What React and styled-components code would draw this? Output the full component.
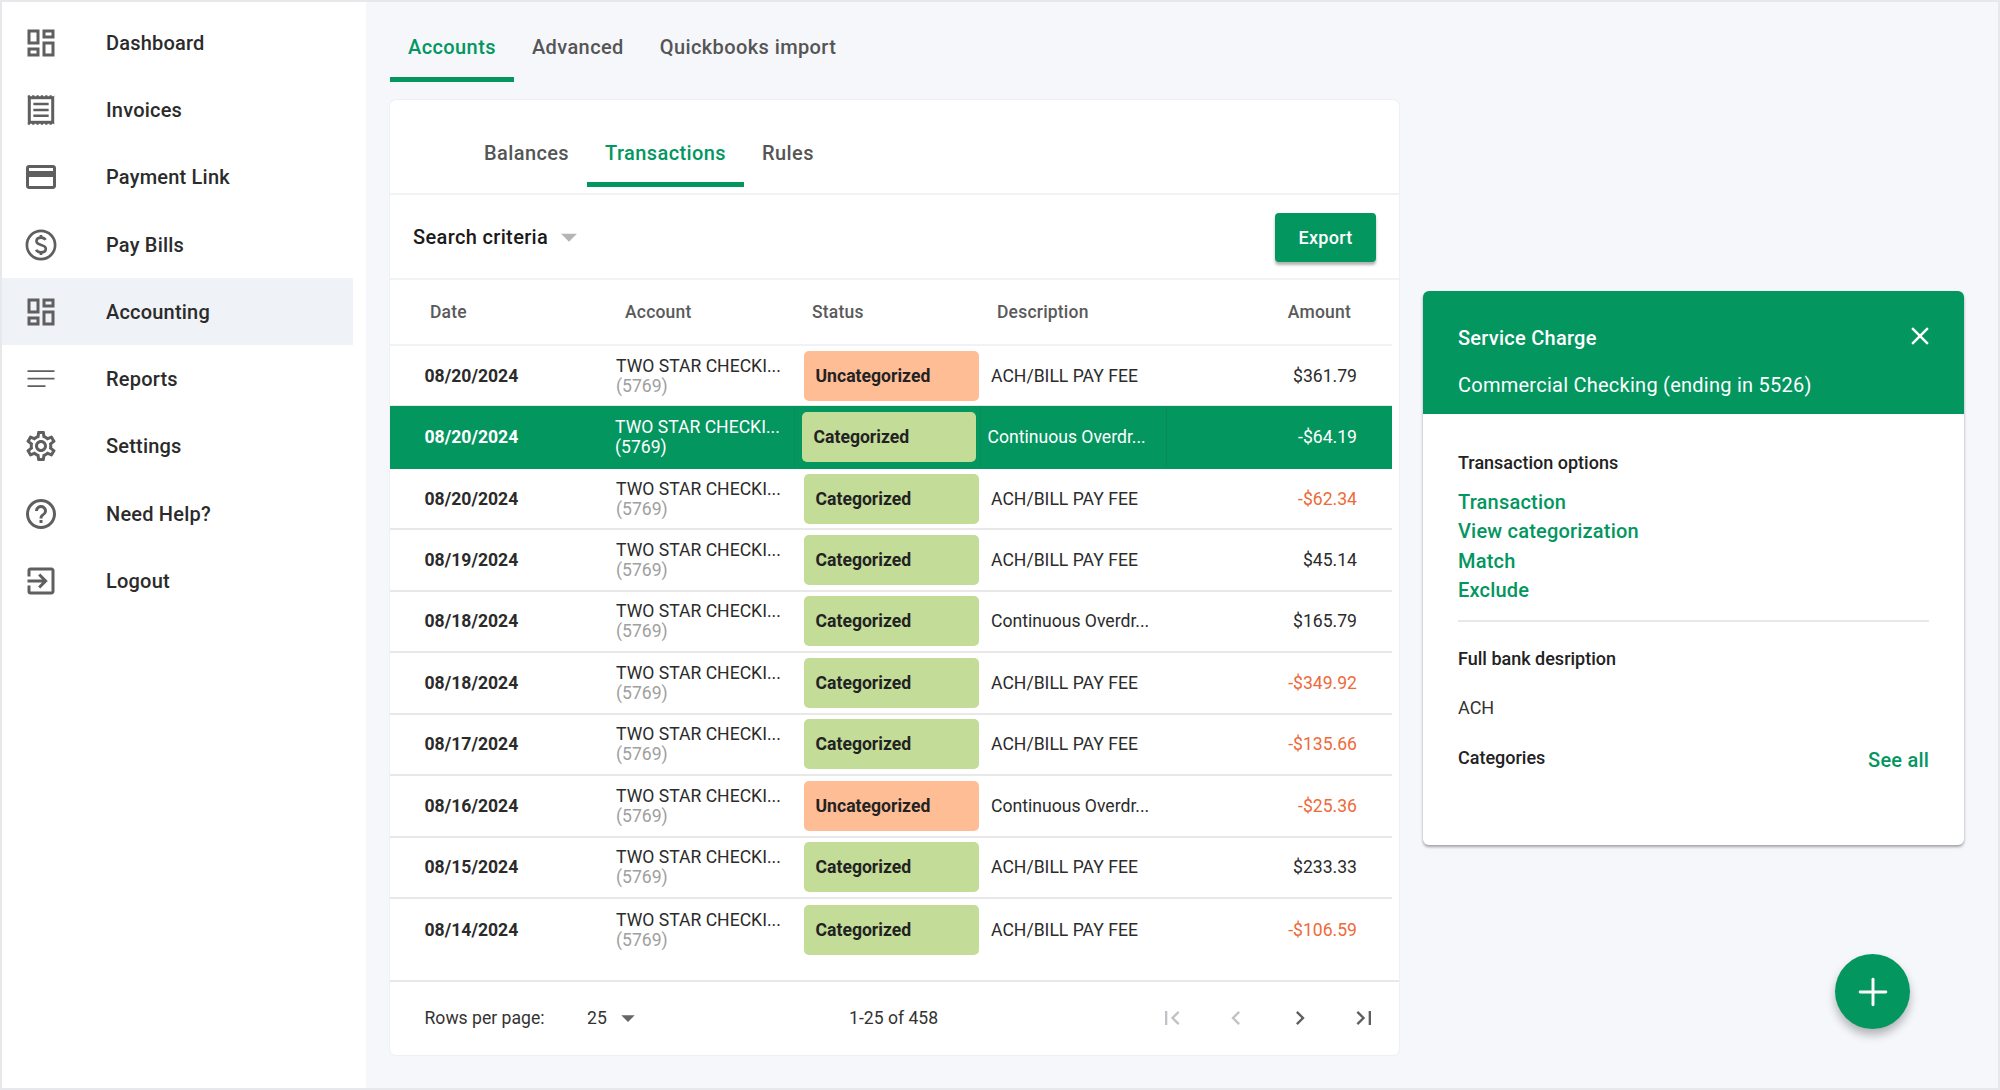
import React from "react";
import styled, { createGlobalStyle } from "styled-components";
import { Plus } from "lucide-react";
import {
  MdOutlineDashboard,
  MdCreditCard,
  MdOutlineSettings,
  MdHelpOutline,
  MdOutlineExitToApp,
  MdClose,
  MdArrowDropDown,
  MdFirstPage,
  MdLastPage,
  MdChevronLeft,
  MdChevronRight,
} from "react-icons/md";

const GREEN = "#03965f";

const GlobalStyle = createGlobalStyle`
  html, body { margin: 0; padding: 0; }
  body { font-family: Roboto, "Liberation Sans", sans-serif; color: #222; }
  * { box-sizing: border-box; }
`;

const Page = styled.div`
  position: relative;
  display: flex;
  width: 2000px;
  height: 1090px;
  background: #f5f7fb;
  border: 2px solid #e6e8ec;
  overflow: hidden;
`;

const Sidebar = styled.nav`
  width: 364px;
  flex-shrink: 0;
  padding: 7px 13px 0 0;
  background: #fff;
`;

const NavItem = styled.div`
  display: flex;
  align-items: center;
  gap: 47px;
  height: 67.3px;
  padding-left: 21px;
  font-size: 20px;
  font-weight: 500;
  letter-spacing: 0.2px;
  color: #2b2b2b;
  background: ${(p) => (p.$active ? "#eff2f6" : "transparent")};
  svg {
    flex-shrink: 0;
    color: #5f5f5f;
  }
`;

const Main = styled.main`
  flex: 1;
  padding-left: 24px;
`;

const TabBar = styled.div`
  display: flex;
  height: 80px;
  margin-bottom: 18px;
`;

const Tab = styled.div`
  display: flex;
  align-items: center;
  padding: 15px 18px 0;
  font-size: 20px;
  font-weight: 500;
  letter-spacing: 0.4px;
  color: ${(p) => (p.$active ? GREEN : "#555")};
  border-bottom: 5px solid ${(p) => (p.$active ? GREEN : "transparent")};
`;

const SubTab = styled(Tab)`
  padding-top: 23px;
`;

const Columns = styled.div`
  display: grid;
  grid-template-columns: 1009px 541px;
  column-gap: 24px;
  align-items: start;
`;

const Card = styled.section`
  height: 955px;
  background: #fff;
  border-radius: 6px;
  box-shadow: 0 0 0 1px #eef0f3;
`;

const SubTabBar = styled.div`
  display: flex;
  height: 95px;
  padding: 0 0 6px 76px;
  border-bottom: 2px solid #f1f2f4;
`;

const SearchBar = styled.div`
  display: flex;
  align-items: center;
  justify-content: space-between;
  height: 85px;
  padding: 0 23px;
  border-bottom: 2px solid #f1f2f4;
`;

const SearchLabel = styled.div`
  display: flex;
  align-items: center;
  gap: 2px;
  font-size: 20px;
  font-weight: 500;
  letter-spacing: 0.35px;
  color: #1a1a1a;
  svg {
    color: #b5b5b5;
  }
`;

const ExportButton = styled.button`
  width: 101px;
  height: 49px;
  margin-top: 2px;
  border: 0;
  border-radius: 4px;
  background: ${GREEN};
  color: #fff;
  font: 500 18px Roboto, sans-serif;
  letter-spacing: 0.3px;
  box-shadow: 0 3px 3px rgba(0, 0, 0, 0.3);
`;

const HeaderRow = styled.div`
  display: grid;
  grid-template-columns: 195px 187px 185px 1fr auto;
  align-items: center;
  width: 1002px;
  height: 66px;
  padding: 0 41px 0 40px;
  font-size: 17.5px;
  font-weight: 500;
  letter-spacing: 0.2px;
  color: #5a5a5a;
  border-bottom: 2px solid #f1f2f4;
`;

const Row = styled.div`
  display: grid;
  grid-template-columns: ${(p) =>
    p.$selected ? "225px 179px 186px 186px 1fr" : "226px 188px 175px 1fr 1fr"};
  align-items: stretch;
  width: 1002px;
  height: ${(p) => (p.$selected ? "62.45px" : "61.45px")};
  margin-top: ${(p) => (p.$selected ? "-1px" : "0")};
  border-bottom: 2px solid ${(p) => (p.$selected ? GREEN : "#e8e8e8")};
  font-size: 17.6px;
  color: ${(p) => (p.$selected ? "#fff" : "#2b2b2b")};
  background: ${(p) => (p.$selected ? GREEN : "transparent")};
  &:last-of-type {
    border-bottom: 0;
  }
`;

const DateCell = styled.div`
  display: flex;
  align-items: center;
  padding-left: 34.5px;
  font-weight: 700;
`;

const AccountCell = styled.div`
  display: flex;
  flex-direction: column;
  justify-content: center;
  line-height: 20px;
`;

const AccountId = styled.span`
  color: ${(p) => (p.$selected ? "#fff" : "#a0a0a0")};
`;

const StatusCell = styled.div`
  display: flex;
  align-items: center;
  padding-left: ${(p) => (p.$selected ? "7px" : "0")};
  border-left: ${(p) => (p.$selected ? "1px solid #0d8a5c" : "0")};
`;

const Chip = styled.div`
  display: flex;
  align-items: center;
  width: ${(p) => (p.$selected ? "174px" : "175px")};
  height: 50px;
  padding-left: 11.5px;
  border-radius: 5px;
  font-weight: 700;
  color: #222;
  background: ${(p) => (p.$status === "Uncategorized" ? "#ffbd96" : "#c3dc98")};
`;

const DescCell = styled.div`
  display: flex;
  align-items: center;
  padding-left: ${(p) => (p.$selected ? "6.5px" : "12px")};
  border-left: ${(p) => (p.$selected ? "1px solid #0d8a5c" : "0")};
`;

const AmountCell = styled.div`
  display: flex;
  align-items: center;
  justify-content: flex-end;
  padding-right: 35px;
  color: ${(p) => (p.$selected ? "#fff" : p.$negative ? "#ee6a3a" : "#2b2b2b")};
  border-left: ${(p) => (p.$selected ? "1px solid #0d8a5c" : "0")};
`;

const Footer = styled.footer`
  display: grid;
  grid-template-columns: 162.5px 262px 1fr auto;
  align-items: center;
  height: 74px;
  margin-top: 19.5px;
  padding: 0 3px 0 34.5px;
  border-top: 2px solid #e8e8e8;
  font-size: 17.6px;
  color: #333;
`;

const PerPage = styled.div`
  display: flex;
  align-items: center;
  gap: 5px;
  svg {
    color: #666;
  }
`;

const Pager = styled.div`
  display: flex;
`;

const PagerButton = styled.div`
  display: flex;
  align-items: center;
  justify-content: center;
  width: 64px;
  color: ${(p) => (p.$disabled ? "#c0c2c5" : "#5f5f5f")};
`;

const Panel = styled.aside`
  margin-top: 191px;
  height: 554px;
  background: #fff;
  border-radius: 6px;
  overflow: hidden;
  box-shadow: 0 2px 3px rgba(0, 0, 0, 0.35);
`;

const PanelHeader = styled.header`
  position: relative;
  height: 123px;
  padding: 35px 35px 0;
  background: ${GREEN};
  color: #fff;
  font-size: 20px;
  letter-spacing: 0.25px;
`;

const PanelTitle = styled.div`
  font-weight: 500;
  line-height: 24px;
  margin-bottom: 23px;
`;

const PanelSub = styled.div`
  line-height: 24px;
`;

const CloseButton = styled.div`
  position: absolute;
  top: 30px;
  right: 29px;
  display: flex;
`;

const PanelBody = styled.div`
  padding: 38px 35px 0;
`;

const SectionLabel = styled.div`
  font-size: 18px;
  font-weight: 500;
  line-height: 22px;
  color: #222;
`;

const LinkList = styled.div`
  display: flex;
  flex-direction: column;
  margin-top: 14px;
  padding-bottom: 14px;
  border-bottom: 2px solid #e8e8e8;
`;

const PanelLink = styled.a`
  font-size: 20px;
  font-weight: 500;
  line-height: 29.4px;
  letter-spacing: 0.2px;
  color: ${GREEN};
`;

const BankBlock = styled.div`
  margin-top: 26px;
`;

const BankValue = styled.div`
  margin-top: 27px;
  font-size: 18px;
  line-height: 22px;
  color: #333;
`;

const CategoryRow = styled.div`
  display: flex;
  align-items: flex-start;
  justify-content: space-between;
  margin-top: 28px;
  line-height: 0;
  a {
    margin-top: -1px;
  }
`;

const Fab = styled.button`
  position: absolute;
  left: 1833px;
  top: 952px;
  display: flex;
  align-items: center;
  justify-content: center;
  width: 75px;
  height: 75px;
  border: 0;
  border-radius: 50%;
  background: ${GREEN};
  color: #fff;
  box-shadow: 0 6px 10px rgba(0, 0, 0, 0.28);
`;

const ReceiptIcon = () => (
  <svg width="36" height="36" viewBox="0 0 24 24" fill="none" stroke="currentColor">
    <path d="M3.200 2.800h17.600M3.200 21.200h17.600" strokeWidth="1.300" strokeDasharray="1.500 1.400" />
    <rect x="4.200" y="3.800" width="15.600" height="16.400" strokeWidth="2" />
    <path d="M6.900 8h10.200M6.900 12h10.200M6.900 15.800h10.200" strokeWidth="1.700" />
  </svg>
);

const DollarIcon = () => (
  <svg width="36" height="36" viewBox="0 0 24 24" fill="none" stroke="currentColor" strokeWidth="1.800">
    <circle cx="12" cy="12" r="9.400" />
    <path d="M15 8.600c-.5-1-1.600-1.500-3-1.500-1.700 0-3 .9-3 2.400 0 3.300 6.200 1.600 6.200 5 0 1.500-1.400 2.400-3.200 2.400-1.500 0-2.700-.6-3.200-1.700" />
    <path d="M12 5.400v1.800M12 16.900v1.800" />
  </svg>
);

const ReportsIcon = () => (
  <svg width="36" height="36" viewBox="0 0 24 24" fill="none" stroke="currentColor" strokeWidth="1.200">
    <path d="M3 6.800h18M3 11.800h18M3 16.800h12" />
  </svg>
);

const navItems = [
  { label: "Dashboard", icon: <MdOutlineDashboard size={36} /> },
  { label: "Invoices", icon: <ReceiptIcon /> },
  { label: "Payment Link", icon: <MdCreditCard size={36} /> },
  { label: "Pay Bills", icon: <DollarIcon /> },
  { label: "Accounting", icon: <MdOutlineDashboard size={36} />, active: true },
  { label: "Reports", icon: <ReportsIcon /> },
  { label: "Settings", icon: <MdOutlineSettings size={36} /> },
  { label: "Need Help?", icon: <MdHelpOutline size={36} /> },
  { label: "Logout", icon: <MdOutlineExitToApp size={36} /> },
];

const BILL = "ACH/BILL PAY FEE";
const OVERDRAFT = "Continuous Overdr...";

const rows = [
  { date: "08/20/2024", status: "Uncategorized", desc: BILL, amount: "$361.79" },
  { date: "08/20/2024", status: "Categorized", desc: OVERDRAFT, amount: "-$64.19", selected: true },
  { date: "08/20/2024", status: "Categorized", desc: BILL, amount: "-$62.34" },
  { date: "08/19/2024", status: "Categorized", desc: BILL, amount: "$45.14" },
  { date: "08/18/2024", status: "Categorized", desc: OVERDRAFT, amount: "$165.79" },
  { date: "08/18/2024", status: "Categorized", desc: BILL, amount: "-$349.92" },
  { date: "08/17/2024", status: "Categorized", desc: BILL, amount: "-$135.66" },
  { date: "08/16/2024", status: "Uncategorized", desc: OVERDRAFT, amount: "-$25.36" },
  { date: "08/15/2024", status: "Categorized", desc: BILL, amount: "$233.33" },
  { date: "08/14/2024", status: "Categorized", desc: BILL, amount: "-$106.59" },
];

const App = () => {
  return (
    <Page>
      <GlobalStyle />
      <Sidebar>
        {navItems.map((item) => (
          <NavItem key={item.label} $active={item.active}>
            {item.icon}
            {item.label}
          </NavItem>
        ))}
      </Sidebar>
      <Main>
        <TabBar>
          <Tab $active>Accounts</Tab>
          <Tab>Advanced</Tab>
          <Tab>Quickbooks import</Tab>
        </TabBar>
        <Columns>
          <Card>
            <SubTabBar>
              <SubTab>Balances</SubTab>
              <SubTab $active>Transactions</SubTab>
              <SubTab>Rules</SubTab>
            </SubTabBar>
            <SearchBar>
              <SearchLabel>
                Search criteria
                <MdArrowDropDown size={38} />
              </SearchLabel>
              <ExportButton>Export</ExportButton>
            </SearchBar>
            <HeaderRow>
              <div>Date</div>
              <div>Account</div>
              <div>Status</div>
              <div>Description</div>
              <div>Amount</div>
            </HeaderRow>
            {rows.map((row, i) => (
              <Row key={i} $selected={row.selected}>
                <DateCell>{row.date}</DateCell>
                <AccountCell>
                  <span>TWO STAR CHECKI...</span>
                  <AccountId $selected={row.selected}>(5769)</AccountId>
                </AccountCell>
                <StatusCell $selected={row.selected}>
                  <Chip $selected={row.selected} $status={row.status}>
                    {row.status}
                  </Chip>
                </StatusCell>
                <DescCell $selected={row.selected}>{row.desc}</DescCell>
                <AmountCell
                  $selected={row.selected}
                  $negative={row.amount.startsWith("-")}
                >
                  {row.amount}
                </AmountCell>
              </Row>
            ))}
            <Footer>
              <div>Rows per page:</div>
              <PerPage>
                25
                <MdArrowDropDown size={32} />
              </PerPage>
              <div>1-25 of 458</div>
              <Pager>
                <PagerButton $disabled>
                  <MdFirstPage size={28} />
                </PagerButton>
                <PagerButton $disabled>
                  <MdChevronLeft size={28} />
                </PagerButton>
                <PagerButton>
                  <MdChevronRight size={28} />
                </PagerButton>
                <PagerButton>
                  <MdLastPage size={28} />
                </PagerButton>
              </Pager>
            </Footer>
          </Card>
          <Panel>
            <PanelHeader>
              <PanelTitle>Service Charge</PanelTitle>
              <PanelSub>Commercial Checking (ending in 5526)</PanelSub>
              <CloseButton>
                <MdClose size={30} />
              </CloseButton>
            </PanelHeader>
            <PanelBody>
              <SectionLabel>Transaction options</SectionLabel>
              <LinkList>
                <PanelLink>Transaction</PanelLink>
                <PanelLink>View categorization</PanelLink>
                <PanelLink>Match</PanelLink>
                <PanelLink>Exclude</PanelLink>
              </LinkList>
              <BankBlock>
                <SectionLabel>Full bank desription</SectionLabel>
                <BankValue>ACH</BankValue>
              </BankBlock>
              <CategoryRow>
                <SectionLabel>Categories</SectionLabel>
                <PanelLink>See all</PanelLink>
              </CategoryRow>
            </PanelBody>
          </Panel>
        </Columns>
      </Main>
      <Fab>
        <Plus size={44} strokeWidth={1.6} />
      </Fab>
    </Page>
  );
};

export default App;
